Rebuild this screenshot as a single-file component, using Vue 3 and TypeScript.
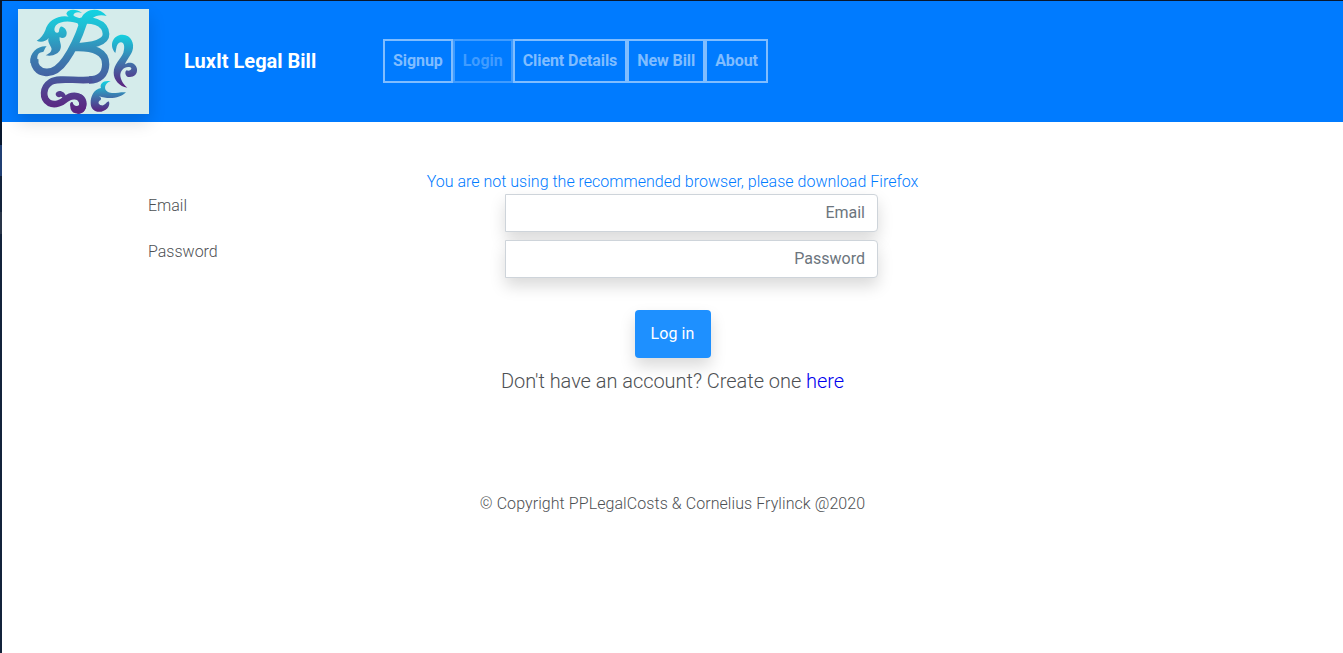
<script setup lang="ts">
import { ref } from 'vue'

interface NavItem {
  label: string
  disabled?: boolean
}

const navItems: NavItem[] = [
  { label: 'Signup' },
  { label: 'Login', disabled: true },
  { label: 'Client Details' },
  { label: 'New Bill' },
  { label: 'About' },
]

const email = ref('')
const password = ref('')
</script>

<template>
  <div class="page">
    <header class="navbar">
      <svg class="logo" viewBox="54 27 393 315" preserveAspectRatio="none" aria-label="LuxIt logo">
        <defs>
          <linearGradient id="ink" gradientUnits="userSpaceOnUse" x1="0" y1="30" x2="0" y2="340">
            <stop offset="0" stop-color="#14d3e2" />
            <stop offset="0.15" stop-color="#20bfd4" />
            <stop offset="0.45" stop-color="#3b7db0" />
            <stop offset="0.75" stop-color="#4a539b" />
            <stop offset="1" stop-color="#5c207e" />
          </linearGradient>
          <linearGradient id="hook" gradientUnits="userSpaceOnUse" x1="0" y1="105" x2="0" y2="262">
            <stop offset="0" stop-color="#14d0df" />
            <stop offset="0.5" stop-color="#3f79ae" />
            <stop offset="1" stop-color="#5c207e" />
          </linearGradient>
          <linearGradient id="curl" gradientUnits="userSpaceOnUse" x1="0" y1="243" x2="0" y2="336">
            <stop offset="0" stop-color="#14d3e2" />
            <stop offset="0.45" stop-color="#3b7db0" />
            <stop offset="1" stop-color="#5c207e" />
          </linearGradient>
          <linearGradient id="tail" gradientUnits="userSpaceOnUse" x1="0" y1="225" x2="0" y2="340">
            <stop offset="0" stop-color="#445f9f" />
            <stop offset="0.5" stop-color="#553b8d" />
            <stop offset="1" stop-color="#5c207e" />
          </linearGradient>
        </defs>
        <rect x="54" y="27" width="393" height="315" fill="#d5eceb" />
        <g fill="none" stroke="url(#ink)" stroke-width="20" stroke-linejoin="round">
          <path d="M250 68 C237 108 218 149 197 179 C181 202 163 219 138 217 C113 215 101 197 104 176" stroke-width="23" />
          <path d="M232 66 C270 53 317 67 318 102 C319 127 280 137 222 139" />
          <path d="M222 143 C284 140 318 158 317 193 C317 222 298 240 267 240" stroke-width="22" />
        </g>
        <g fill="url(#ink)">
          <path d="M91 190 C87 155 117 136 140 139 C131 146 135 158 124 157 C111 160 110 173 114 191 Z" />
          <path d="M240 73 C213 61 182 62 168 76 C160 86 163 99 172 98 C181 97 174 87 182 80 C190 78 202 91 200 101 C200 112 187 118 179 111 C177 126 187 134 181 148 C176 162 158 170 137 166 C151 160 158 151 153 142 C149 132 142 124 146 114 C137 126 120 128 110 122 C123 116 130 104 136 91 C143 60 177 43 209 50 C226 53 242 60 256 68 Z" />
          <path d="M199 41 C202 27 228 24 246 39 C233 35 222 37 220 46 C225 52 235 52 244 58 L237 72 C222 61 203 52 199 41 Z" />
          <path d="M244 55 C256 25 298 20 320 48 C303 43 288 46 277 55 C269 63 262 69 255 77 L239 73 Z" />
        </g>
        <path fill="url(#hook)" d="M346 159 C324 133 342 103 368 104 C393 105 405 130 397 153 C391 169 378 182 375 193 C385 184 408 187 411 207 C413 225 398 234 382 230 C375 225 374 215 380 211 C390 216 399 205 391 202 C375 197 360 211 361 228 C364 246 374 256 382 263 C358 259 341 240 341 218 C341 191 363 177 370 158 C376 137 371 126 362 127 C348 130 350 146 346 159 Z" />
        <path fill="none" stroke="url(#tail)" stroke-width="20" d="M277 239 C229 245 178 230 152 246 C127 262 126 296 148 309 C166 318 187 307 197 298 C211 286 236 281 246 302 C254 324 243 332 232 332" />
        <path fill="url(#tail)" d="M167 281 C172 267 195 271 199 292 L185 310 C189 298 190 288 180 291 C174 294 166 287 167 281 Z M211 320 C208 308 214 304 218 307 C219 317 231 322 237 315 C239 303 231 296 220 298 L218 285 C241 272 261 291 260 312 C259 334 242 344 226 340 C216 337 211 329 211 320 Z" />
        <path fill="url(#curl)" d="M332 244 C311 239 298 252 303 264 C281 268 272 289 272 309 C272 328 286 338 304 335 C325 331 332 312 326 304 C317 307 315 318 304 316 C294 314 293 305 301 301 C306 296 302 292 297 289 C326 299 362 295 378 277 C354 276 339 283 324 276 C309 269 314 249 332 244 Z" />
      </svg>
      <h1 class="brand">LuxIt Legal Bill</h1>
      <nav class="nav">
        <button
          v-for="item in navItems"
          :key="item.label"
          class="nav-item"
          :disabled="item.disabled"
          type="button"
        >{{ item.label }}</button>
      </nav>
    </header>

    <main class="content">
      <p class="notice">You are not using the recommended browser, please download Firefox</p>
      <form class="form" @submit.prevent>
        <div class="row">
          <label class="label" for="email">Email</label>
          <input id="email" v-model="email" class="field" type="email" placeholder="Email" />
        </div>
        <div class="row">
          <label class="label" for="password">Password</label>
          <input id="password" v-model="password" class="field" type="password" placeholder="Password" />
        </div>
        <button class="submit" type="submit">Log in</button>
      </form>
      <p class="prompt">Don't have an account? Create one <a class="link" href="#">here</a></p>
    </main>

    <footer class="footer">© Copyright PPLegalCosts &amp; Cornelius Frylinck @2020</footer>
  </div>
</template>

<style>
body {
  margin: 0;
  overflow: hidden;
}
</style>

<style scoped>
.page {
  box-sizing: border-box;
  height: 653px;
  border-top: 1px solid #061b3b;
  border-left: 2px solid;
  border-image: linear-gradient(#08172d 0 145px, #203f73 145px 176px, #13233b 176px 212px, #293548 212px 234px, #13233b 234px) 1 0 0 2;
  border-image-width: 1px 0 0 2px;
  background: #fff;
  color: #4d5053;
  font-family: Roboto, sans-serif;
  font-size: 16px;
  font-weight: 300;
  line-height: 24px;
}

.navbar {
  box-sizing: border-box;
  display: flex;
  align-items: center;
  height: 121px;
  padding: 0 16px;
  background: #007bff;
}

.logo {
  flex: none;
  width: 131px;
  height: 105px;
  box-shadow: 0 8px 16px rgba(0, 0, 0, 0.15);
}

.brand {
  width: 199px;
  margin: 0 0 2px 35px;
  color: #fff;
  font-size: 20px;
  font-weight: 700;
  line-height: 30px;
  white-space: nowrap;
}

.nav {
  display: flex;
  margin-bottom: 2px;
}

.nav-item {
  box-sizing: border-box;
  height: 44px;
  padding: 0 8px;
  border: 2px solid #80bdff;
  background: transparent;
  color: #80bdff;
  font: 700 16px/24px Roboto, sans-serif;
  letter-spacing: -0.08px;
  white-space: nowrap;
}

.nav-item:disabled {
  border-color: #409cff;
  color: #409cff;
  letter-spacing: 0;
}

.content {
  display: flex;
  flex-direction: column;
  align-items: center;
  padding-top: 48px;
}

.notice {
  margin: 0;
  color: #007bff;
  letter-spacing: 0.01px;
}

.form {
  display: flex;
  flex-direction: column;
  align-items: center;
  gap: 8px;
  width: 1049px;
}

.row {
  display: flex;
  align-self: stretch;
  height: 38px;
}

.label {
  width: 357px;
}

.field {
  box-sizing: border-box;
  width: 373px;
  height: 38px;
  padding: 5px 12px 7px;
  border: 1px solid #ced4da;
  border-radius: 0 4px 4px 0;
  background: #fff;
  box-shadow: 0 8px 16px rgba(0, 0, 0, 0.15);
  font: 400 16px/24px Roboto, sans-serif;
  text-align: right;
}

.field::placeholder {
  color: #6c757d;
  opacity: 1;
}

.submit {
  width: 76px;
  height: 48px;
  margin-top: 24px;
  padding: 0;
  border: 0;
  border-radius: 4px;
  background: #1e90ff;
  box-shadow: 0 8px 16px rgba(0, 0, 0, 0.15);
  color: #fff;
  font: 400 16px/24px Roboto, sans-serif;
  letter-spacing: 0.1px;
}

.prompt {
  margin: 8px 0 0;
  font-size: 20px;
  line-height: 30px;
  letter-spacing: -0.04px;
}

.link {
  color: #0000ee;
  text-decoration: none;
}

.footer {
  margin-top: 96px;
  text-align: center;
  letter-spacing: 0.07px;
}
</style>
